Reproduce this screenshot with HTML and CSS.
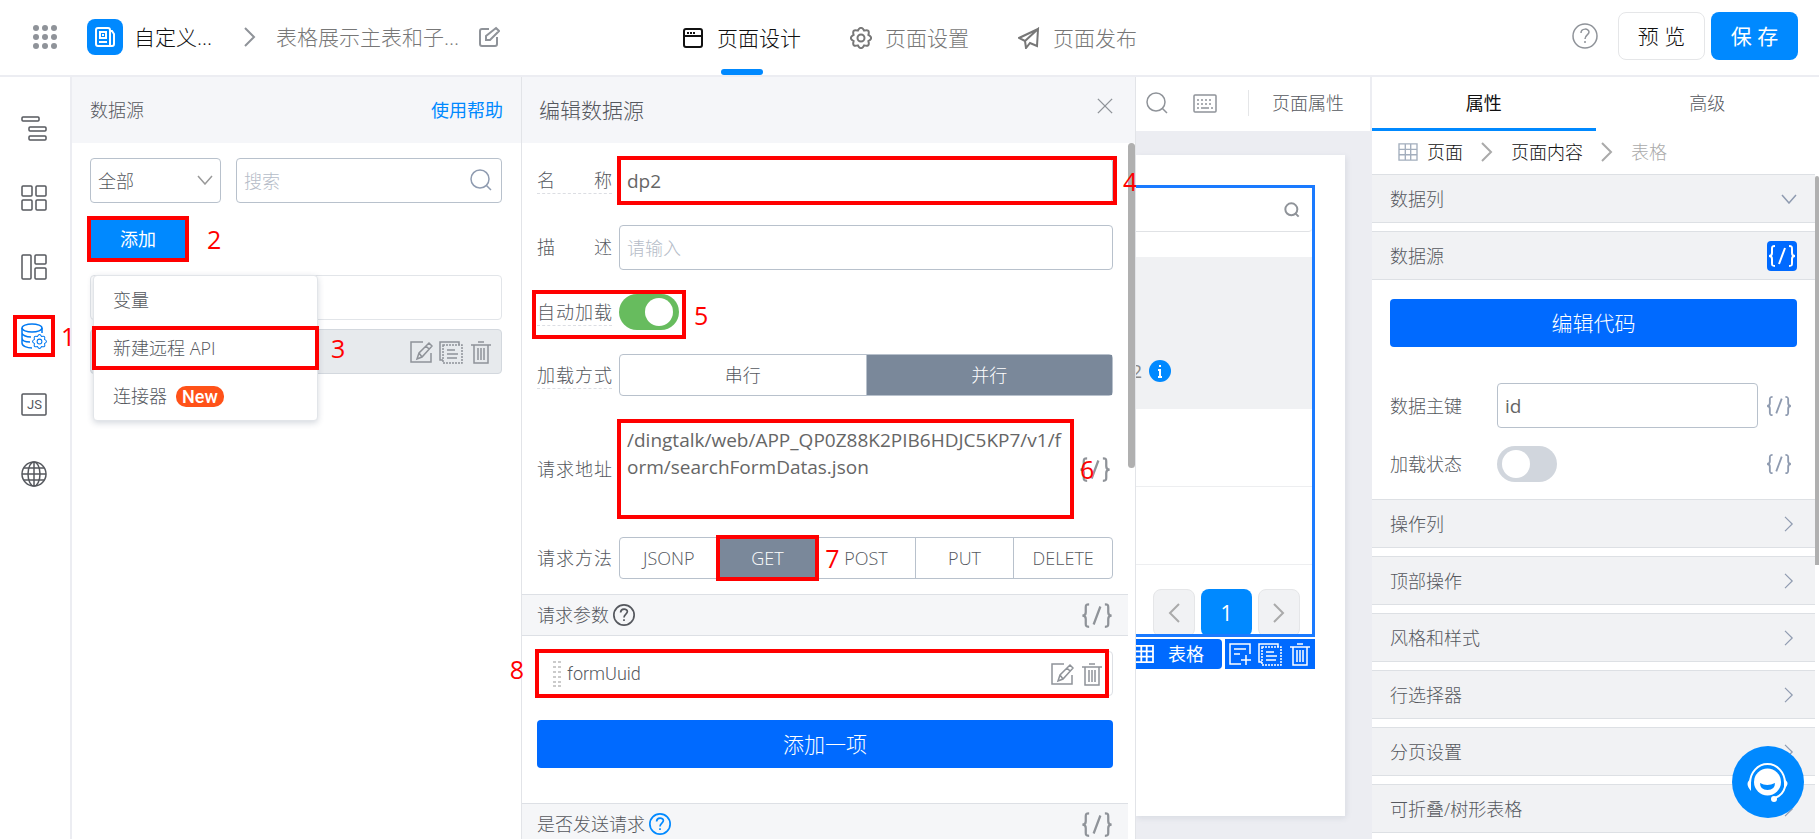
FILE: index.html
```html
<!DOCTYPE html>
<html lang="zh-CN">
<head>
    <meta charset="UTF-8">
    <meta name="viewport" content="width=device-width, initial-scale=1.0">
    <title>页面设计</title>
    <link rel="stylesheet" href="styles.css">
</head>
<body>

    <!-- shared icons -->
    <svg class="sprite" aria-hidden="true">
        <symbol id="code" viewBox="0 0 30 24"><path d="M8 2C5 2 5 3 5 5v4c0 2-1 3-3 3 2 0 3 1 3 3v4c0 2 0 3 3 3M22 2c3 0 3 1 3 3v4c0 2 1 3 3 3-2 0-3 1-3 3v4c0 2 0 3-3 3M18 4l-6 16"/></symbol>
        <symbol id="edit" viewBox="0 0 24 24"><path d="M14 2H2v20h20V13M20 3l3 3-10 11-5 2 2-6L20 3zM17 6l3 3M10 13l3 4"/></symbol>
        <symbol id="copy" viewBox="0 0 24 24"><path d="M4 20H1V2h19v3M8 10h8M8 14h11M8 18h10"/><path d="M4 5h19v18H4z" stroke-dasharray="2 1"/></symbol>
        <symbol id="trash" viewBox="0 0 24 24"><path d="M2 5h20M9 2h6M5 5v18h14V5M9 8v12M12 8v12M15 8v12"/></symbol>
        <symbol id="search" viewBox="0 0 24 24"><circle cx="11" cy="11" r="9"/><path d="M17 17l5 5"/></symbol>
        <symbol id="right" viewBox="0 0 12 20"><path d="M1 1l9 9-9 9"/></symbol>
        <symbol id="left" viewBox="0 0 12 20"><path d="M11 1l-9 9 9 9"/></symbol>
        <symbol id="down" viewBox="0 0 16 10"><path d="M1 1l7 8 7-8"/></symbol>
        <symbol id="grid" viewBox="0 0 22 20"><path d="M1 1h20v18H1zM1 7h20M1 13h20M8 1v18M14 1v18"/></symbol>
        <symbol id="help" viewBox="0 0 26 26"><circle cx="13" cy="13" r="12"/><path d="M9 10c0-5 8-5 8-1 0 3-4 3-4 7M13 18v2"/></symbol>
        <symbol id="gear" viewBox="0 0 22 22"><path d="M18.4 7.9Q24 11 18.4 14.1 20.2 20.2 14.1 18.4 11 24 7.9 18.4 1.8 20.2 3.6 14.1-2 11 3.6 7.9 1.8 1.8 7.9 3.6 11-2 14.1 3.6 20.2 1.8 18.4 7.9z"/><circle cx="11" cy="11" r="3.5"/></symbol>
    </svg>

    <header class="header">
        <div class="header-left">
            <button class="icon-btn" aria-label="应用">
                <svg class="dots" viewBox="0 0 26 26"><g fill="currentColor" stroke="none"><circle cx="4" cy="4" r="3"/><circle cx="13" cy="4" r="3"/><circle cx="22" cy="4" r="3"/><circle cx="4" cy="13" r="3"/><circle cx="13" cy="13" r="3"/><circle cx="22" cy="13" r="3"/><circle cx="4" cy="22" r="3"/><circle cx="13" cy="22" r="3"/><circle cx="22" cy="22" r="3"/></g></svg>
            </button>
            <span class="logo"><svg viewBox="0 0 22 22"><path d="M16 20H4q-2 0-2-2V4q0-2 2-2h10q2 0 2 2v16M16 5h2l2 3v10q0 2-2 2h-2"/><path d="M6 6h6v6H6zM9 8v2M5 16h8"/></svg></span>
            <span class="app-name">自定义...</span>
            <svg class="crumb"><use href="#right"/></svg>
            <span class="page-name">表格展示主表和子...</span>
            <button class="icon-btn" aria-label="重命名"><svg class="rename" viewBox="0 0 22 22"><path d="M11 3H4Q2 3 2 5v13q0 2 2 2h13q2 0 2-2v-7M18 2l3 3-9 9H8v-4z"/></svg></button>
        </div>
        <nav class="tabs">
            <a href="#" class="tab active"><svg viewBox="0 0 22 22"><rect x="2" y="2" width="18" height="18" rx="2"/><path d="M2 9h18"/><path d="M5 6h8" stroke-dasharray="2 1"/></svg>页面设计</a>
            <a href="#" class="tab"><svg><use href="#gear"/></svg>页面设置</a>
            <a href="#" class="tab"><svg viewBox="0 0 22 22"><path d="M20 2L1 11l6 3 13-12-1 17-7-3-4 5-1-7"/></svg>页面发布</a>
        </nav>
        <div class="header-right">
            <button class="icon-btn" aria-label="帮助"><svg class="help-lg"><use href="#help"/></svg></button>
            <button class="btn-preview">预 览</button>
            <button class="btn-save">保 存</button>
        </div>
    </header>

    <main class="main">
        <nav class="rail">
            <button aria-label="大纲树"><svg viewBox="0 0 26 26"><rect x="1" y="1" width="17" height="4" rx="1"/><rect x="8" y="11" width="17" height="4" rx="1"/><rect x="8" y="20" width="17" height="4" rx="1"/></svg></button>
            <button aria-label="组件库"><svg viewBox="0 0 26 26"><rect x="1" y="1" width="10" height="10" rx="1"/><rect x="15" y="1" width="10" height="10" rx="1"/><rect x="1" y="15" width="10" height="10" rx="1"/><rect x="15" y="15" width="10" height="10" rx="1"/></svg></button>
            <button aria-label="区块"><svg viewBox="0 0 26 26"><rect x="1" y="1" width="9" height="24" rx="1"/><rect x="14" y="1" width="11" height="9" rx="1"/><rect x="14" y="14" width="11" height="11" rx="1"/></svg></button>
            <button class="current" aria-label="数据源">
                <svg viewBox="0 0 26 26"><ellipse cx="11" cy="5" rx="10" ry="4"/><path d="M1 5v15c0 3 5 5 10 5M21 5v5M1 10c0 2 4 4 9 4M1 15c0 3 4 4 8 4"/><use href="#gear" x="11" y="11" width="15" height="15"/></svg>
                <span class="mark"><b>1</b></span>
            </button>
            <button aria-label="JS"><svg viewBox="0 0 26 26"><rect x="1" y="2" width="24" height="21" rx="1"/><text x="6" y="17">JS</text></svg></button>
            <button aria-label="多语言"><svg viewBox="0 0 26 26"><circle cx="13" cy="13" r="12"/><ellipse cx="13" cy="13" rx="6" ry="12"/><path d="M13 1v24M1 13h24M3 7h20M3 19h20"/></svg></button>
        </nav>

        <section class="source">
            <div class="panel-head">
                <span>数据源</span>
                <a href="#">使用帮助</a>
            </div>
            <div class="source-body">
                <div class="filters">
                    <div class="select">
                        <select aria-label="类型"><option>全部</option></select>
                        <svg><use href="#down"/></svg>
                    </div>
                    <div class="search">
                        <input type="text" placeholder="搜索" aria-label="搜索">
                        <svg><use href="#search"/></svg>
                    </div>
                </div>
                <div class="add">
                    <button class="btn-add">添加</button>
                    <span class="mark"><b>2</b></span>
                </div>
                <div class="list">
                    <div class="list-item"></div>
                    <div class="list-item selected">
                        <button class="icon-btn" aria-label="编辑"><svg><use href="#edit"/></svg></button>
                        <button class="icon-btn" aria-label="复制"><svg><use href="#copy"/></svg></button>
                        <button class="icon-btn" aria-label="删除"><svg><use href="#trash"/></svg></button>
                    </div>
                    <div class="menu">
                        <a href="#">变量</a>
                        <a href="#">新建远程 API<span class="mark"><b>3</b></span></a>
                        <a href="#">连接器<em>New</em></a>
                    </div>
                </div>
            </div>
        </section>

        <section class="editor">
            <div class="panel-head editor-head">
                <span>编辑数据源</span>
                <button class="icon-btn" aria-label="关闭"><svg class="close" viewBox="0 0 18 18"><path d="M1 1l16 16M17 1L1 17"/></svg></button>
            </div>
            <div class="scroll-thumb"></div>
            <form class="form">
                <div class="row">
                    <label class="tip" for="name">名称</label>
                    <div class="field"><input type="text" id="name" value="dp2"><span class="mark"><b>4</b></span></div>
                </div>
                <div class="row">
                    <label for="desc">描述</label>
                    <div class="field"><input type="text" id="desc" placeholder="请输入"></div>
                </div>
                <div class="row">
                    <div class="auto">
                        <label class="tip" for="auto">自动加载</label>
                        <input type="checkbox" class="switch" id="auto" checked>
                        <span class="mark"><b>5</b></span>
                    </div>
                </div>
                <div class="row">
                    <span class="label tip">加载方式</span>
                    <div class="segment">
                        <label><input type="radio" name="mode">串行</label>
                        <label><input type="radio" name="mode" checked>并行</label>
                    </div>
                </div>
                <div class="row row-url">
                    <label for="url">请求地址</label>
                    <div class="field"><textarea id="url">/dingtalk/web/APP_QP0Z88K2PIB6HDJC5KP7/v1/form/searchFormDatas.json</textarea><span class="mark"><b>6</b></span></div>
                    <button type="button" class="icon-btn" aria-label="绑定变量"><svg class="code"><use href="#code"/></svg></button>
                </div>
                <div class="row row-method">
                    <span class="label">请求方法</span>
                    <div class="segment">
                        <label><input type="radio" name="method">JSONP</label>
                        <label><input type="radio" name="method" checked>GET<span class="mark"><b>7</b></span></label>
                        <label><input type="radio" name="method">POST</label>
                        <label><input type="radio" name="method">PUT</label>
                        <label><input type="radio" name="method">DELETE</label>
                    </div>
                </div>
                <div class="group">
                    <span>请求参数</span>
                    <svg class="help"><use href="#help"/></svg>
                    <button type="button" class="icon-btn" aria-label="绑定变量"><svg class="code"><use href="#code"/></svg></button>
                </div>
                <div class="params">
                    <div class="param">
                        <svg class="drag" viewBox="0 0 8 26"><path d="M0 1h8M0 6h8M0 11h8M0 16h8M0 21h8M0 25h8" stroke-dasharray="3 2"/></svg>
                        <span>formUuid</span>
                        <button type="button" class="icon-btn" aria-label="编辑"><svg><use href="#edit"/></svg></button>
                        <button type="button" class="icon-btn" aria-label="删除"><svg><use href="#trash"/></svg></button>
                        <span class="mark mark-left"><b>8</b></span>
                    </div>
                    <button type="button" class="btn-block">添加一项</button>
                </div>
                <div class="group">
                    <span>是否发送请求</span>
                    <svg class="help blue"><use href="#help"/></svg>
                    <button type="button" class="icon-btn" aria-label="绑定变量"><svg class="code"><use href="#code"/></svg></button>
                </div>
            </form>
        </section>

        <section class="canvas">
            <div class="toolbar">
                <button class="icon-btn" aria-label="搜索"><svg><use href="#search"/></svg></button>
                <button class="icon-btn" aria-label="快捷键"><svg viewBox="0 0 24 24"><rect x="1" y="4" width="22" height="17" rx="1"/><path d="M4 9h16M4 13h16" stroke-dasharray="2 2"/><path d="M4 17h2M8 17h8M18 17h2"/></svg></button>
                <a href="#">页面属性</a>
            </div>
            <div class="sheet">
                <div class="table-box">
                    <div class="table-search"><svg><use href="#search"/></svg></div>
                    <div class="table-head"><span>2</span><svg viewBox="0 0 22 22"><circle cx="11" cy="11" r="11" fill="#0089ff" stroke="none"/><path d="M11 5v2M9 10h2v7M9 17h4" stroke="#fff"/></svg></div>
                    <div class="table-row"></div>
                    <div class="table-row"></div>
                    <div class="pager">
                        <button aria-label="上一页"><svg><use href="#left"/></svg></button>
                        <button class="on">1</button>
                        <button aria-label="下一页"><svg><use href="#right"/></svg></button>
                    </div>
                </div>
                <div class="table-tools">
                    <span class="tool-name"><svg class="tool-grid"><use href="#grid"/></svg>表格</span>
                    <span class="tool-actions">
                        <button class="icon-btn" aria-label="插入"><svg viewBox="0 0 24 24"><path d="M22 12V2H2v20h11M6 7h12M6 12h6M18 13v10M13 18h10"/></svg></button>
                        <button class="icon-btn" aria-label="复制"><svg><use href="#copy"/></svg></button>
                        <button class="icon-btn" aria-label="删除"><svg><use href="#trash"/></svg></button>
                    </span>
                </div>
            </div>
        </section>

        <aside class="props">
            <div class="prop-tabs">
                <a href="#" class="active">属性</a>
                <a href="#">高级</a>
            </div>
            <div class="path">
                <svg class="path-grid"><use href="#grid"/></svg>
                <a href="#">页面</a>
                <svg class="path-arrow"><use href="#right"/></svg>
                <a href="#">页面内容</a>
                <svg class="path-arrow"><use href="#right"/></svg>
                <span>表格</span>
            </div>
            <div class="prop-list">
                <button class="prop">数据列<svg class="arrow-down"><use href="#down"/></svg></button>
                <div class="prop">数据源<span class="bound"><svg class="code"><use href="#code"/></svg></span></div>
                <div class="prop-body">
                    <button class="btn-block">编辑代码</button>
                    <div class="prop-row">
                        <label for="key">数据主键</label>
                        <input type="text" id="key" value="id">
                        <button class="icon-btn" aria-label="绑定变量"><svg class="code"><use href="#code"/></svg></button>
                    </div>
                    <div class="prop-row">
                        <label for="loading">加载状态</label>
                        <input type="checkbox" class="switch" id="loading">
                        <button class="icon-btn" aria-label="绑定变量"><svg class="code"><use href="#code"/></svg></button>
                    </div>
                </div>
                <button class="prop">操作列<svg class="arrow"><use href="#right"/></svg></button>
                <button class="prop">顶部操作<svg class="arrow"><use href="#right"/></svg></button>
                <button class="prop">风格和样式<svg class="arrow"><use href="#right"/></svg></button>
                <button class="prop">行选择器<svg class="arrow"><use href="#right"/></svg></button>
                <button class="prop">分页设置<svg class="arrow"><use href="#right"/></svg></button>
                <button class="prop">可折叠/树形表格<svg class="arrow"><use href="#right"/></svg></button>
                <div class="prop-thumb"></div>
            </div>
        </aside>
    </main>

    <button class="service" aria-label="客服">
        <svg viewBox="0 0 44 44"><path d="M4 23a17.5 19 0 0 1 35 0M39 27q-2 8-10 11" stroke="#fff"/><path d="M5 19q-7 4 0 12zM38 19q7 4 0 10z" fill="#fff" stroke="none"/><circle cx="21.5" cy="22" r="13.5" fill="#fff" stroke="none"/><path d="M14 23q7 4 15 0 0 7-7.5 7T14 23z" fill="#0089ff" stroke="none"/><circle cx="28" cy="39" r="3" fill="#fff" stroke="none"/></svg>
    </button>

</body>
</html>
```
FILE: styles.css
```css
* {
    margin: 0;
    padding: 0;
    box-sizing: border-box;
}
body {
    height: 100vh;
    display: flex;
    flex-direction: column;
    overflow: hidden;
    background: white;
    color: #55585e;
    font-family: "Open Sans", "Noto Sans CJK SC", sans-serif;
    font-size: 18px;
    font-weight: 300;
    line-height: 26px;
}
button, input, select, textarea {
    font: inherit;
    color: inherit;
}
button {
    border: none;
    background: none;
    cursor: pointer;
}
a {
    color: inherit;
    text-decoration: none;
}
svg {
    display: block;
    flex: none;
    width: 24px;
    height: 24px;
    fill: none;
    stroke: currentColor;
    stroke-width: 1.5;
}
.sprite {
    position: absolute;
    width: 0;
    height: 0;
}
.icon-btn {
    display: flex;
    color: #8f9399;
}
.code {
    width: 36px;
    height: 27px;
    stroke-width: 2;
}

/* numbered red frames */
.mark {
    position: absolute;
    inset: -3px;
    border: 4px solid red;
    pointer-events: none;
    z-index: 5;
}
.mark b {
    position: absolute;
    left: 100%;
    top: 50%;
    margin-left: 12px;
    color: red;
    font-size: 25px;
    font-weight: 400;
    line-height: 32px;
    transform: translateY(-50%);
}
.mark-left b {
    left: auto;
    right: 100%;
    top: 40%;
    margin-right: 15px;
}

/* header */
.header {
    display: grid;
    grid-template-columns: 1fr auto 1fr;
    height: 77px;
    border-bottom: 2px solid #ecedf2;
    font-size: 21px;
}
.header-left, .header-right, .tabs {
    display: flex;
    align-items: center;
}
.header-left {
    padding: 0 0 2px 32px;
    white-space: nowrap;
}
.dots {
    width: 26px;
    height: 26px;
}
.logo {
    display: flex;
    align-items: center;
    justify-content: center;
    width: 36px;
    height: 36px;
    margin: 0 11px 0 29px;
    border-radius: 8px;
    background: #0089ff;
    color: white;
}
.logo svg {
    width: 22px;
    height: 22px;
    stroke-width: 2;
}
.app-name {
    color: #111;
}
.crumb {
    width: 12px;
    height: 20px;
    margin: 0 20px 0 32px;
    color: #8f9399;
    stroke-width: 2;
}
.page-name {
    color: #777;
}
.rename {
    width: 22px;
    height: 22px;
    margin-left: 19px;
    stroke-width: 2;
}
.tabs {
    gap: 49px;
    align-items: stretch;
}
.tab {
    position: relative;
    display: flex;
    align-items: center;
    gap: 13px;
    color: #777;
}
.tab svg {
    width: 22px;
    height: 22px;
    stroke-width: 2;
}
.tab.active {
    color: #111;
}
.tab.active::after {
    content: "";
    position: absolute;
    left: 50%;
    bottom: 0;
    width: 42px;
    height: 6px;
    margin-left: -21px;
    border-radius: 3px;
    background: #0089ff;
}
.header-right {
    justify-content: flex-end;
    gap: 6px;
    padding: 0 21px 3px 0;
}
.help-lg {
    width: 26px;
    height: 26px;
    margin-right: 14px;
}
.btn-preview, .btn-save {
    width: 87px;
    height: 48px;
    border-radius: 8px;
    font-size: 21px;
}
.btn-preview {
    border: 1px solid #e5e6e8;
    color: #111;
}
.btn-save {
    background: #0089ff;
    color: white;
    font-weight: 400;
}

.main {
    flex: 1;
    min-height: 0;
    display: grid;
    grid-template-columns: 72px 449px 615px 1fr 447px;
    overflow: hidden;
}

/* left rail */
.rail {
    display: flex;
    flex-direction: column;
    align-items: center;
    gap: 29px;
    padding: 32px 2px 0 0;
    border-right: 2px solid #ecedf2;
}
.rail button {
    position: relative;
    padding: 7px;
}
.rail svg {
    width: 26px;
    height: 26px;
}
.rail text {
    fill: currentColor;
    stroke: none;
    font: 400 13px Roboto, sans-serif;
}
.rail .current {
    color: #0079f2;
}
.rail .mark {
    inset: -1px;
}
.rail b {
    margin-left: 10px;
}

/* data source list */
.panel-head {
    display: flex;
    align-items: center;
    justify-content: space-between;
    height: 66px;
    padding: 0 18px 1px;
    background: #f5f6f9;
}
.panel-head a {
    color: #0089ff;
    font-weight: 400;
}
.source-body {
    padding: 15px 19px 0 18px;
}
.filters {
    display: flex;
    gap: 15px;
}
.select, .search {
    position: relative;
}
.select {
    width: 131px;
}
.search {
    flex: 1;
}
.select select, input[type="text"], textarea {
    display: block;
    width: 100%;
    height: 45px;
    padding: 0 7px;
    border: 1px solid #b8c1cc;
    border-radius: 4px;
    background: white;
    outline: none;
    appearance: none;
}
.editor input[type="text"], .editor textarea, .prop-row input[type="text"] {
    color: #666;
    font-size: 19px;
    font-weight: 400;
}
input::placeholder {
    color: #b5bcc8;
    font-size: 18px;
    font-weight: 300;
}
.select svg, .search svg {
    position: absolute;
    right: 8px;
    top: 17px;
    width: 16px;
    height: 10px;
    color: #999;
    pointer-events: none;
}
.search svg {
    right: 9px;
    top: 10px;
    width: 24px;
    height: 24px;
    color: #8f9bb0;
}
.add {
    position: relative;
    width: 96px;
    margin: 16px 0;
}
.btn-add {
    display: block;
    width: 100%;
    height: 40px;
    border-radius: 4px;
    background: #0089ff;
    color: white;
    font-weight: 400;
}
.add b {
    margin-left: 22px;
}
.list {
    position: relative;
}
.list-item {
    display: flex;
    align-items: center;
    justify-content: flex-end;
    gap: 6px;
    height: 45px;
    margin-bottom: 9px;
    padding-right: 8px;
    border: 1px solid #e2e5e9;
    border-radius: 4px;
}
.list-item.selected {
    background: #e7eaed;
    border-color: #d3d8de;
}
.menu {
    position: absolute;
    top: 0;
    left: 3px;
    width: 225px;
    border: 1px solid #e2e5e9;
    border-radius: 4px;
    background: white;
    box-shadow: 0 2px 6px rgba(40, 60, 90, 0.2);
}
.menu a {
    position: relative;
    display: flex;
    align-items: center;
    height: 48px;
    padding-left: 19px;
}
.menu .mark {
    inset: 2px -2px;
}
.menu b {
    margin-left: 16px;
}
.menu em {
    margin-left: 9px;
    padding: 0 6px;
    border-radius: 10px;
    background: #ff5219;
    color: white;
    font: 500 18px/21px Roboto, sans-serif;
}

/* data source editor */
.editor {
    position: relative;
    border-left: 1px solid #e2e4e8;
    border-right: 1px solid #e2e4e8;
}
.editor-head {
    padding: 0 22px 1px 17px;
    font-size: 21px;
}
.close {
    width: 16px;
    height: 16px;
    margin-bottom: 8px;
}
.scroll-thumb {
    position: absolute;
    right: 0;
    top: 66px;
    width: 7px;
    height: 325px;
    border-radius: 4px;
    background: #b0b0b0;
}
.form {
    padding: 15px 7px 0 0;
}
.row {
    display: flex;
    align-items: center;
    margin: 0 15px 22px;
}
.row > label, .auto label, .label {
    width: 75px;
    margin-right: 7px;
    border-bottom: 1px dashed transparent;
    text-align: justify;
    text-align-last: justify;
}
.row .tip {
    border-bottom-color: #dcdee3;
}
.field {
    position: relative;
    flex: 1;
}
.field .mark {
    inset: -2px -4px -2px -2px;
}
.auto {
    position: relative;
    display: flex;
    align-items: center;
    height: 40px;
    padding-right: 4px;
}
.auto .mark {
    inset: -2px -3px -7px -5px;
}
.switch {
    position: relative;
    flex: none;
    width: 60px;
    height: 36px;
    border-radius: 18px;
    background: #d1d6dd;
    appearance: none;
    cursor: pointer;
}
.switch::before {
    content: "";
    position: absolute;
    left: 5px;
    top: 4px;
    width: 28px;
    height: 28px;
    border-radius: 50%;
    background: white;
}
.switch:checked {
    background: #67bc5e;
}
.switch:checked::before {
    left: 26px;
}
.segment {
    flex: 1;
    display: flex;
    height: 42px;
    border: 1px solid #b8c1cc;
    border-radius: 4px;
}
.segment label {
    position: relative;
    flex: 1;
    display: flex;
    align-items: center;
    justify-content: center;
    border-left: 1px solid #b8c1cc;
}
.segment label:first-child {
    border-left: none;
}
.segment label:has(:checked) {
    background: #7a889a;
    color: white;
}
.segment input {
    position: absolute;
    opacity: 0;
}
.segment b {
    margin-left: 10px;
}
.row-url {
    margin-top: 25px;
    margin-bottom: 20px;
}
.row-url .icon-btn {
    margin-left: 5px;
}
.row-url .mark {
    right: -2px;
}
.field b {
    margin-left: 10px;
}
textarea {
    height: 96px;
    padding: 5px 10px 5px 7px;
    resize: none;
    line-height: 27px;
    word-break: break-all;
}
.row-method {
    margin-bottom: 15px;
}
.group {
    display: flex;
    align-items: center;
    gap: 4px;
    height: 42px;
    padding: 0 13px 0 15px;
    border: 1px solid #dde0e5;
    border-width: 1px 0;
    background: #f5f6f8;
}
.help {
    width: 22px;
    height: 22px;
    stroke-width: 2;
}
.help.blue {
    color: #0089ff;
}
.group .icon-btn {
    margin-left: auto;
}
.params {
    padding: 15px 15px 35px;
}
.param {
    position: relative;
    display: flex;
    align-items: center;
    gap: 6px;
    height: 45px;
    margin-bottom: 24px;
    padding: 0 8px 0 15px;
    border: 1px solid #dde0e5;
    border-radius: 4px;
}
.param span:not(.mark) {
    flex: 1;
    font-family: Roboto, sans-serif;
}
.param .mark {
    right: 3px;
}
.drag {
    width: 8px;
    height: 26px;
    color: #bbb;
}
.btn-block {
    display: block;
    width: 100%;
    height: 48px;
    border-radius: 4px;
    background: #006aff;
    color: white;
    font-size: 21px;
}

/* canvas */
.canvas {
    position: relative;
    z-index: 6;
    overflow: hidden;
    border-right: 2px solid #ecedf2;
    background: #ecedf2;
}
.toolbar {
    display: flex;
    align-items: center;
    gap: 24px;
    height: 54px;
    padding: 0 0 2px 9px;
    background: white;
}
.toolbar a {
    margin-left: 7px;
    padding-left: 23px;
    border-left: 1px solid #e5e6e8;
}
.sheet {
    height: 661px;
    margin: 24px 25px 0 0;
    padding: 30px 30px 0 0;
    background: white;
    box-shadow: 1px 2px 6px rgba(40, 60, 90, 0.1);
}
.table-box {
    height: 452px;
    border: 3px solid #1a7aff;
    border-left: none;
    overflow: hidden;
}
.table-search {
    display: flex;
    align-items: center;
    justify-content: flex-end;
    height: 44px;
    padding-right: 12px;
    border-bottom: 1px solid #e0e2e5;
    border-radius: 0 0 4px 0;
    color: #8f9399;
}
.table-search svg {
    width: 16px;
    height: 16px;
    stroke-width: 3;
}
.table-head {
    display: flex;
    align-items: center;
    gap: 7px;
    height: 152px;
    margin-top: 25px;
    padding-top: 76px;
    background: #f0f1f3;
    color: #888;
    font-weight: 400;
}
.table-head span {
    display: flex;
    justify-content: flex-end;
    width: 6px;
}
.table-head svg {
    width: 22px;
    height: 22px;
    stroke-width: 2;
}
.table-row {
    height: 78px;
    border-bottom: 1px solid #edeef0;
}
.pager {
    display: flex;
    justify-content: flex-end;
    gap: 6px;
    padding: 24px 12px 0 0;
}
.pager button {
    display: flex;
    align-items: center;
    justify-content: center;
    width: 42px;
    height: 48px;
    border: 1px solid #e5e6e8;
    border-radius: 8px;
    background: #f1f2f4;
    color: #aaa;
}
.pager svg {
    width: 12px;
    height: 20px;
    stroke-width: 2;
}
.pager .on {
    width: 51px;
    border: none;
    background: #0089ff;
    color: white;
    font-size: 21px;
    font-weight: 400;
}
.table-tools {
    display: flex;
    justify-content: flex-end;
    gap: 3px;
    height: 30px;
    margin-top: 2px;
    color: white;
    white-space: nowrap;
}
.tool-name, .tool-actions {
    display: flex;
    align-items: center;
    background: #006aff;
}
.tool-name {
    flex: 1;
    min-width: 0;
    justify-content: flex-end;
    gap: 14px;
    padding-right: 18px;
    border-radius: 0 4px 4px 0;
    font-weight: 400;
}
.tool-grid {
    width: 20px;
    height: 18px;
    stroke-width: 2;
}
.tool-actions {
    gap: 6px;
    padding: 0 3px;
}
.tool-actions .icon-btn {
    color: white;
}

/* properties */
.props {
    display: flex;
    flex-direction: column;
    min-height: 0;
    overflow: hidden;
}
.prop-tabs {
    display: flex;
    height: 54px;
    flex: none;
}
.prop-tabs a {
    flex: 1;
    padding-top: 13px;
    text-align: center;
}
.prop-tabs .active {
    border-bottom: 3px solid #0089ff;
    color: #111;
    font-weight: 400;
}
.path {
    display: flex;
    align-items: center;
    height: 43px;
    flex: none;
    padding: 0 0 1px 25px;
    color: #aaa;
}
.path a {
    color: #111;
}
.path-grid {
    width: 22px;
    height: 18px;
    margin-right: 8px;
    color: #a3aebd;
}
.path-arrow {
    width: 12px;
    height: 20px;
    margin: 0 18px;
    stroke-width: 2;
}
.prop-list {
    position: relative;
    padding-right: 4px;
}
.prop-thumb {
    position: absolute;
    right: 0;
    top: 2px;
    width: 4px;
    height: 389px;
    border-radius: 2px 2px 0 0;
    background: #b0b0b0;
}
.prop {
    display: flex;
    align-items: center;
    justify-content: space-between;
    width: 100%;
    height: 49px;
    margin-bottom: 8px;
    padding: 0 18px;
    border: 1px solid #dde0e4;
    border-width: 1px 0;
    background: #f1f2f4;
}
.prop .arrow {
    width: 12px;
    height: 16px;
    margin-right: 2px;
    color: #8f9bb0;
}
.prop .arrow-down {
    width: 16px;
    height: 10px;
    color: #8f9bb0;
}
.bound {
    padding: 3px 0;
    border-radius: 4px;
    background: #006aff;
    color: white;
}
.bound .code {
    width: 30px;
    height: 24px;
}
.prop-body {
    padding: 11px 18px 17px;
}
.prop-row {
    display: flex;
    align-items: center;
    margin-top: 18px;
}
.prop-row:nth-child(2) {
    margin-top: 36px;
}
.prop-row label {
    width: 107px;
}
.prop-row input[type="text"] {
    flex: 1;
}
.prop-row .icon-btn {
    margin-left: auto;
    padding: 0 3px 0 6px;
    color: #8f9bb0;
}
.prop-row .code {
    width: 30px;
    height: 22px;
}

.service {
    position: fixed;
    right: 15px;
    bottom: 21px;
    z-index: 10;
    display: flex;
    align-items: center;
    justify-content: center;
    width: 72px;
    height: 72px;
    border-radius: 50%;
    background: #0089ff;
}
.service svg {
    width: 44px;
    height: 44px;
    stroke-width: 2;
}
```
